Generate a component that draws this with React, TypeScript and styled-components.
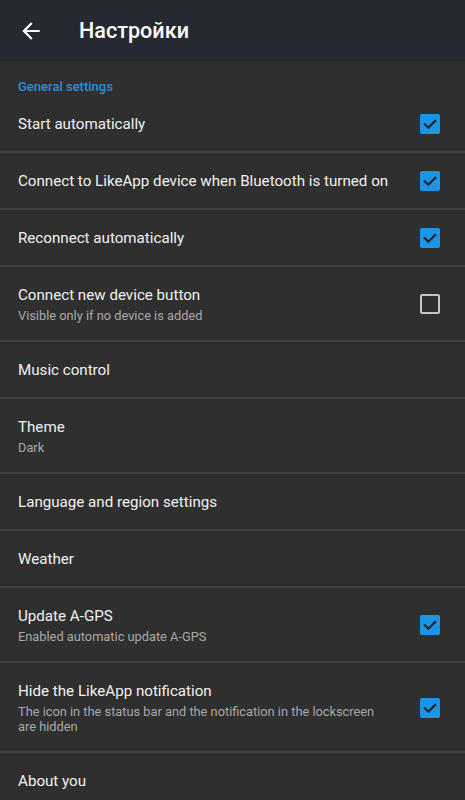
import React from "react";
import styled, { createGlobalStyle } from "styled-components";

const Global = createGlobalStyle`
  html, body { margin: 0; padding: 0; background: #2f2f2f; }
  body { font-family: Roboto, "Noto Sans", "Liberation Sans", sans-serif; -webkit-font-smoothing: antialiased; }
  * { box-sizing: border-box; }
`;

const Screen = styled.div`
  width: 465px;
  min-height: 800px;
  background: #2f2f2f;
  display: flex;
  flex-direction: column;
`;

const Toolbar = styled.header`
  height: 61px;
  background: #252a31;
  display: flex;
  align-items: center;
  padding-left: 18px;
  flex-shrink: 0;
`;

const BackButton = styled.div`
  width: 26px;
  height: 26px;
  display: flex;
  align-items: center;
  justify-content: center;
  margin-right: 35px;
`;

const Title = styled.h1`
  margin: 0;
  font-size: 21.6px;
  font-weight: 500;
  color: #ffffff;
`;

const Category = styled.div`
  padding: 19px 18px 0 18px;
  height: 35px;
  font-size: 13px;
  line-height: 14px;
  font-weight: 500;
  color: #2c8fd6;
`;

const Row = styled.div`
  display: flex;
  align-items: center;
  padding: 18px 25px 17px 18px;
  border-bottom: 2px solid #414141;
`;

const Texts = styled.div`
  flex: 1;
  min-width: 0;
  padding-right: 25px;
  display: flex;
  flex-direction: column;
`;

const RowTitle = styled.div`
  font-size: 15.15px;
  line-height: 20px;
  color: #f2f2f2;
`;

const RowSub = styled.div`
  margin-top: 3px;
  font-size: 12.8px;
  line-height: 15px;
  color: #a9a9a9;
`;

const Box = styled.div<{ $checked: boolean }>`
  width: 20px;
  height: 20px;
  border-radius: 2px;
  flex-shrink: 0;
  display: flex;
  align-items: center;
  justify-content: center;
  background: ${(p) => (p.$checked ? "#1b96e6" : "transparent")};
  border: ${(p) => (p.$checked ? "none" : "2px solid #c6c6c6")};
`;

const Checkbox = ({ checked }: { checked: boolean }) => (
  <Box $checked={checked}>
    {checked && (
      <svg width="20" height="20" viewBox="0 0 20 20">
        <polyline
          points="4.8,10.3 8.3,13.8 15.2,6.9"
          fill="none"
          stroke="#1c2630"
          strokeWidth="2.2"
          strokeLinecap="square"
        />
      </svg>
    )}
  </Box>
);

type Item = { title: string; sub?: string; check?: boolean };

const items: Item[] = [
  { title: "Start automatically", check: true },
  { title: "Connect to LikeApp device when Bluetooth is turned on", check: true },
  { title: "Reconnect automatically", check: true },
  { title: "Connect new device button", sub: "Visible only if no device is added", check: false },
  { title: "Music control" },
  { title: "Theme", sub: "Dark" },
  { title: "Language and region settings" },
  { title: "Weather" },
  { title: "Update A-GPS", sub: "Enabled automatic update A-GPS", check: true },
  {
    title: "Hide the LikeApp notification",
    sub: "The icon in the status bar and the notification in the lockscreen are hidden",
    check: true,
  },
  { title: "About you" },
];

export default function App() {
  return (
    <>
      <Global />
      <Screen>
        <Toolbar>
          <BackButton>
            <svg width="26" height="26" viewBox="0 0 24 24">
              <path d="M20 11H7.83l5.59-5.59L12 4l-8 8 8 8 1.41-1.41L7.83 13H20v-2z" fill="#ffffff" />
            </svg>
          </BackButton>
          <Title>Настройки</Title>
        </Toolbar>
        <Category>General settings</Category>
        {items.map((it) => (
          <Row key={it.title}>
            <Texts>
              <RowTitle>{it.title}</RowTitle>
              {it.sub && <RowSub>{it.sub}</RowSub>}
            </Texts>
            {it.check !== undefined && <Checkbox checked={it.check} />}
          </Row>
        ))}
      </Screen>
    </>
  );
}
